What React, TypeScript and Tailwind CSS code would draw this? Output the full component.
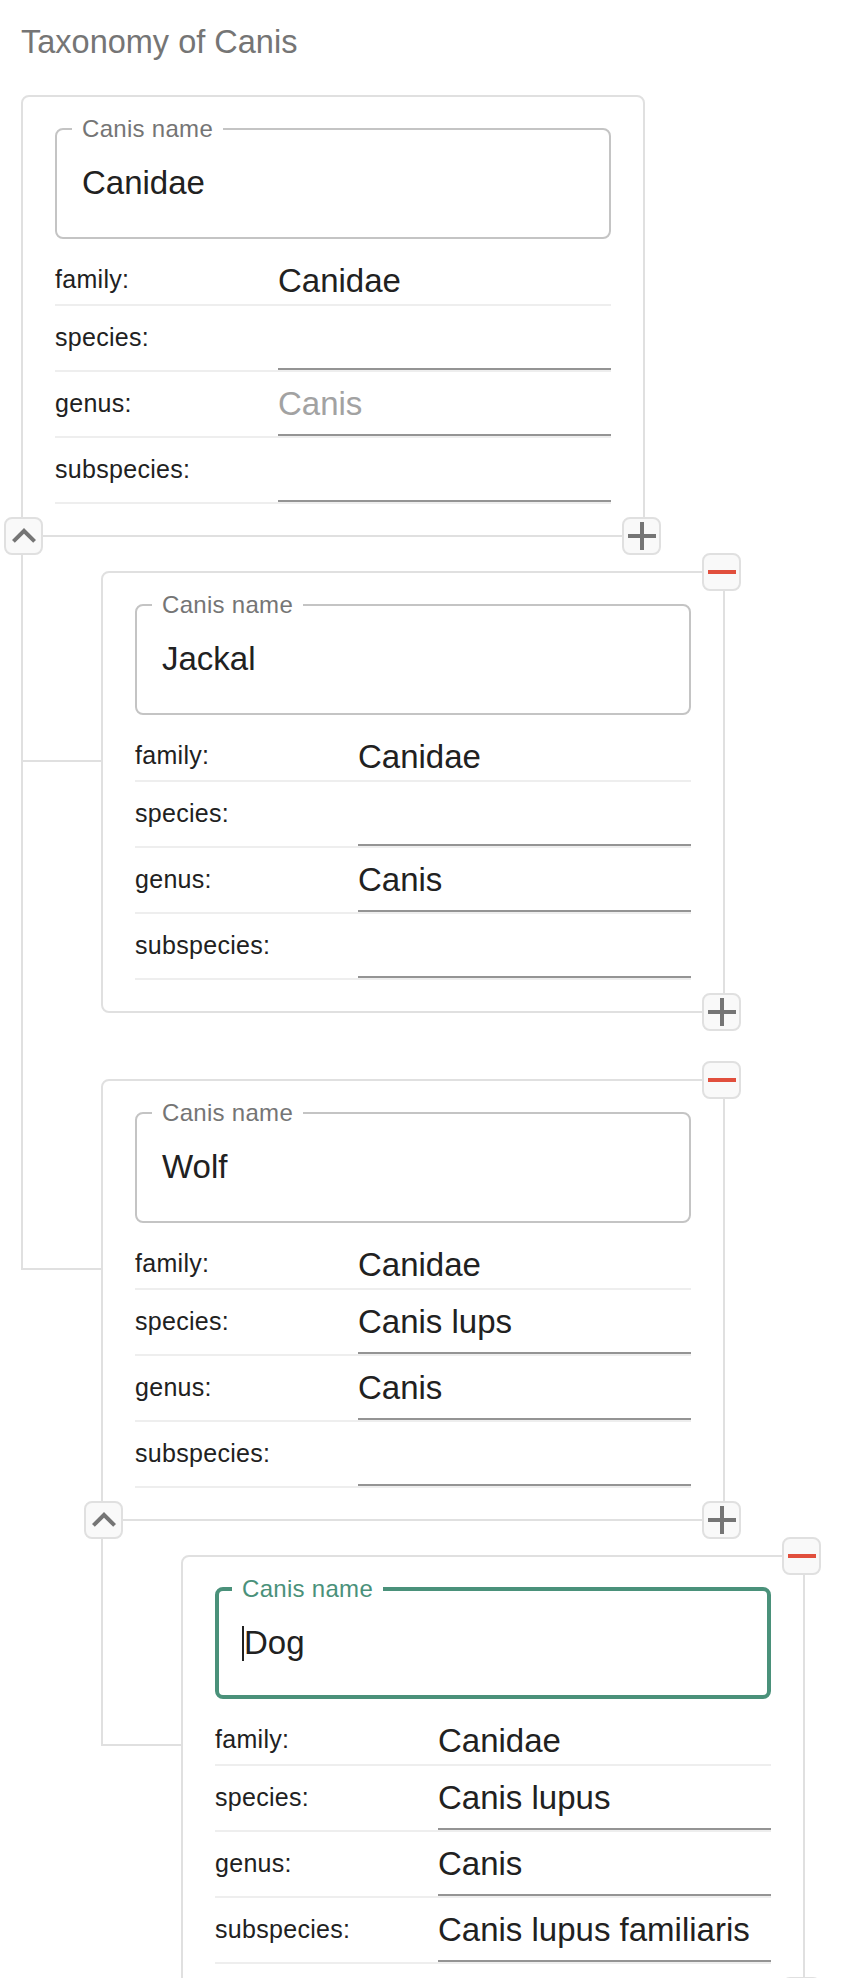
import { Fragment } from 'react';

type Taxon = {
  name: string;
  family: string;
  species: string;
  genus: string;
  subspecies: string;
  placeholder?: string;
  focused?: boolean;
  children?: Taxon[];
};

const tree: Taxon = {
  name: 'Canidae',
  family: 'Canidae',
  species: '',
  genus: '',
  placeholder: 'Canis',
  subspecies: '',
  children: [
    { name: 'Jackal', family: 'Canidae', species: '', genus: 'Canis', subspecies: '' },
    {
      name: 'Wolf',
      family: 'Canidae',
      species: 'Canis lups',
      genus: 'Canis',
      subspecies: '',
      children: [
        {
          name: 'Dog',
          family: 'Canidae',
          species: 'Canis lupus',
          genus: 'Canis',
          subspecies: 'Canis lupus familiaris',
          focused: true,
        },
      ],
    },
  ],
};

const PlusIcon = () => (
  <svg viewBox="0 0 24 24" className="w-[48px] h-[48px] shrink-0" fill="#757575">
    <path d="M19 13h-6v6h-2v-6H5v-2h6V5h2v6h6v2z" />
  </svg>
);

const MinusIcon = () => (
  <svg viewBox="0 0 24 24" className="w-[48px] h-[48px] shrink-0" fill="#e14f3d">
    <path d="M19 13H5v-2h14v2z" />
  </svg>
);

const ChevronIcon = () => (
  <svg viewBox="0 0 24 24" className="w-[48px] h-[48px] shrink-0" fill="#757575">
    <path d="M12 8l-6 6 1.41 1.41L12 10.83l4.59 4.58L18 14z" />
  </svg>
);

const btn =
  'absolute z-10 w-[39px] h-[38px] flex items-center justify-center overflow-visible rounded-[8px] border-2 border-[#e0e0e0] bg-[#f9f9f9]';

function Row({ label, value, placeholder, editable, tall }: { label: string; value: string; placeholder?: string; editable: boolean; tall: boolean }) {
  return (
    <div className={`flex border-b-2 border-[#eeeeee] ${tall ? 'h-[66px]' : 'h-[50px]'}`}>
      <div className="w-[223px] flex items-center text-[25px] tracking-[0.3px] text-[#212121]">{label}</div>
      <div
        className={`flex-1 flex items-center text-[33px] leading-none ${editable ? 'border-b-2 border-[#949494]' : ''} ${
          value ? 'text-[#212121]' : 'text-[#a2a2a2]'
        }`}
      >
        {value || placeholder}
      </div>
    </div>
  );
}

function Card({ node, isRoot }: { node: Taxon; isRoot: boolean }) {
  const hasChildren = !!node.children?.length;
  return (
    <div className="relative w-[624px] rounded-[8px] border-2 border-[#e0e0e0] bg-white px-[32px] pt-[20px] pb-[31px]">
      <fieldset
        className={`h-[122px] rounded-[8px] ${
          node.focused ? 'border-4 border-[#4a917a] px-[13px]' : 'border-2 border-[#c4c4c4] px-[15px]'
        }`}
      >
        <legend
          className={`px-[10px] text-[24px] leading-[24px] tracking-[0.3px] ${
            node.focused ? 'text-[#4a917a]' : 'text-[#757575]'
          }`}
        >
          Canis name
        </legend>
        <div className="mt-[26px] pl-[10px] h-[32px] flex items-center text-[33px] leading-[32px] text-[#212121]">
          {node.focused && <span className="inline-block w-[2px] h-[35px] bg-[#212121]" />}
          {node.name}
        </div>
      </fieldset>

      <div className="mt-[17px]">
        <Row label="family:" value={node.family} editable={false} tall={false} />
        <Row label="species:" value={node.species} editable tall />
        <Row label="genus:" value={node.genus} placeholder={node.placeholder} editable tall />
        <Row label="subspecies:" value={node.subspecies} editable tall />
      </div>

      {!isRoot && (
        <button className={`${btn} right-[-18px] top-[-20px]`}>
          <MinusIcon />
        </button>
      )}
      {hasChildren && (
        <button className={`${btn} left-[-19px] bottom-[-20px]`}>
          <ChevronIcon />
        </button>
      )}
      <button className={`${btn} right-[-18px] bottom-[-20px]`}>
        <PlusIcon />
      </button>
    </div>
  );
}

function Node({ node, isRoot, last }: { node: Taxon; isRoot?: boolean; last?: boolean }) {
  const kids = node.children ?? [];
  return (
    <div className={`relative ${isRoot ? '' : 'pt-[34px] pb-[32px]'}`}>
      {!isRoot && (
        <Fragment>
          <div className="absolute left-[-80px] top-0 w-[80px] h-[225px] border-l-2 border-b-2 border-[#e0e0e0]" />
          {!last && <div className="absolute left-[-80px] top-0 bottom-0 border-l-2 border-[#e0e0e0]" />}
        </Fragment>
      )}
      <Card node={node} isRoot={!!isRoot} />
      {kids.length > 0 && (
        <div className="pl-[80px]">
          {kids.map((k, i) => (
            <Node key={k.name} node={k} last={i === kids.length - 1} />
          ))}
        </div>
      )}
    </div>
  );
}

export default function App() {
  return (
    <div className="min-h-screen bg-white pl-[21px] pt-[26px] [font-family:'Liberation_Sans',Arial,sans-serif]">
      <h1 className="text-[32.5px] leading-[32px] font-normal text-[#757575]">Taxonomy of Canis</h1>
      <div className="mt-[37px]">
        <Node node={tree} isRoot />
      </div>
    </div>
  );
}
